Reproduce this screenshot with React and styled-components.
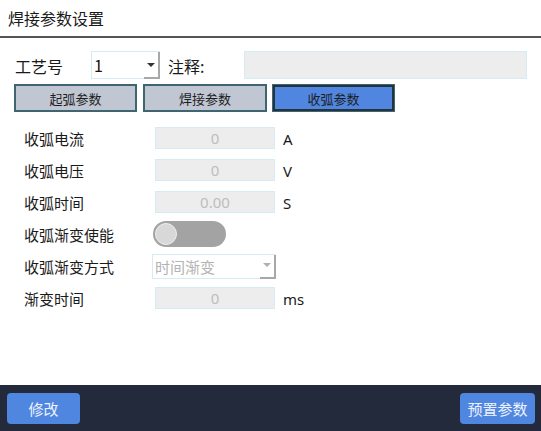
import React from "react";
import styled, { createGlobalStyle } from "styled-components";

const Global = createGlobalStyle`
  html, body { margin: 0; padding: 0; background: #fff; }
  body { font-family: "Noto Sans CJK SC", "Noto Sans", sans-serif; color: #1a1a1a; }
  * { box-sizing: border-box; }
`;

const Page = styled.div`
  width: 541px;
  height: 431px;
  display: flex;
  flex-direction: column;
  overflow: hidden;
`;

const Header = styled.div`
  height: 38px;
  padding-left: 8px;
  display: flex;
  align-items: center;
  border-bottom: 2px solid #555;
  font-size: 16px;
  line-height: 1;
  padding-bottom: 1px;
`;

const Content = styled.div`
  padding: 13px 14px 0 14px;
  display: flex;
  flex-direction: column;
`;

const TopRow = styled.div`
  height: 28px;
  display: flex;
  align-items: center;
`;

const TopLabel = styled.div`
  font-size: 16px;
  width: ${(p) => p.$w}px;
  padding-left: ${(p) => p.$pl || 0}px;
  line-height: 1;
  padding-top: 2px;
`;

const SelectBox = styled.div`
  width: ${(p) => p.$w}px;
  height: ${(p) => p.$h}px;
  border: 1px solid #d6ecf4;
  background: #fff;
  display: flex;
  align-items: center;
  position: relative;
  font-size: ${(p) => p.$fs}px;
  color: ${(p) => p.$c};
  padding-left: 2px;
`;

const SelectText = styled.span`
  flex: 1;
  line-height: 1;
`;

const ArrowBtn = styled.div`
  width: 16px;
  align-self: stretch;
  border-right: 2px solid #a8a8a8;
  border-bottom: 2px solid #a8a8a8;
  display: flex;
  align-items: center;
  justify-content: center;
  margin-bottom: -1px;
  margin-right: -1px;
`;

const Tri = styled.div`
  width: 0;
  height: 0;
  border-left: 4px solid transparent;
  border-right: 4px solid transparent;
  border-top: 4px solid ${(p) => p.$c};
  margin-top: ${(p) => p.$mt || 0}px;
`;

const NoteBox = styled.div`
  margin-left: 0;
  width: 283px;
  height: 28px;
  background: #ededed;
  border: 1px solid #d6ecf4;
`;

const Tabs = styled.div`
  margin-top: 5px;
  display: flex;
  height: 28px;
`;

const Tab = styled.div`
  width: ${(p) => p.$w}px;
  margin-left: ${(p) => p.$ml}px;
  height: 28px;
  display: flex;
  align-items: center;
  justify-content: center;
  font-size: 13px;
  color: #1e1e1e;
  background: ${(p) => (p.$active ? "#5086e0" : "#c0c7d3")};
  border: ${(p) => (p.$active ? "3px solid #24343f" : "2px solid #3f6670")};
  outline: ${(p) => (p.$active ? "1px solid #3f6670" : "none")};
  outline-offset: -1px;
`;

const Form = styled.div`
  margin-top: 10px;
  display: flex;
  flex-direction: column;
`;

const Row = styled.div`
  height: 32px;
  display: grid;
  grid-template-columns: 128px 131px auto;
  align-items: center;
  padding-left: 10px;
`;

const Label = styled.div`
  font-size: 15px;
  line-height: 1;
  padding-top: 1px;
`;

const Control = styled.div`
  display: flex;
  align-items: center;
  padding-left: ${(p) => p.$pl || 0}px;
`;

const Input = styled.div`
  width: 120px;
  height: 22px;
  background: #ededed;
  border: 1px solid #d6ecf4;
  display: flex;
  align-items: center;
  justify-content: center;
  color: #bdbdbd;
  font-size: 15px;
  font-family: "Noto Sans", sans-serif;
  line-height: 1;
`;

const Unit = styled.div`
  font-family: "Noto Sans", sans-serif;
  font-size: 15px;
  padding-left: 0;
  padding-top: 2px;
  line-height: 1;
`;

const Toggle = styled.div`
  width: 73px;
  height: 26px;
  border-radius: 13px;
  background: #a3a3a3;
  display: flex;
  align-items: center;
  padding-left: 2px;
  margin-left: -2px;
`;

const Knob = styled.div`
  width: 22px;
  height: 22px;
  border-radius: 50%;
  background: #d8d8d8;
  border: 1px solid #eeeeee;
`;

const Footer = styled.div`
  margin-top: auto;
  height: 46px;
  background: #232a3c;
  display: flex;
  align-items: center;
  justify-content: space-between;
  padding: 1px 6px 0 7px;
`;

const FootBtn = styled.button`
  height: 31px;
  width: ${(p) => p.$w}px;
  background: #4f86df;
  border: none;
  border-radius: 4px;
  color: #eef2ff;
  font-family: "Noto Sans CJK SC", sans-serif;
  font-size: 15px;
  padding: 0;
  display: flex;
  align-items: center;
  justify-content: center;
`;

const fields = [
  { label: "收弧电流", value: "0", unit: "A" },
  { label: "收弧电压", value: "0", unit: "V" },
  { label: "收弧时间", value: "0.00", unit: "S" },
];

export default function App() {
  return (
    <Page>
      <Global />
      <Header>焊接参数设置</Header>
      <Content>
        <TopRow>
          <TopLabel $w={77} $pl={1}>工艺号</TopLabel>
          <SelectBox $w={69} $h={28} $fs={16} $c="#201008">
            <SelectText>1</SelectText>
            <ArrowBtn>
              <Tri $c="#333" $mt={1} />
            </ArrowBtn>
          </SelectBox>
          <TopLabel $w={84} $pl={8}>注释:</TopLabel>
          <NoteBox />
        </TopRow>
        <Tabs>
          <Tab $w={123} $ml={0}>起弧参数</Tab>
          <Tab $w={124} $ml={6}>焊接参数</Tab>
          <Tab $w={123} $ml={5} $active>收弧参数</Tab>
        </Tabs>
        <Form>
          {fields.map((f) => (
            <Row key={f.label}>
              <Label>{f.label}</Label>
              <Control $pl={3}>
                <Input>{f.value}</Input>
              </Control>
              <Unit>{f.unit}</Unit>
            </Row>
          ))}
          <Row>
            <Label>收弧渐变使能</Label>
            <Control $pl={3}>
              <Toggle>
                <Knob />
              </Toggle>
            </Control>
            <span />
          </Row>
          <Row>
            <Label>收弧渐变方式</Label>
            <Control>
              <SelectBox $w={124} $h={25} $fs={15} $c="#b3b3b3">
                <SelectText>时间渐变</SelectText>
                <ArrowBtn>
                  <Tri $c="#b0b0b0" $mt={-2} />
                </ArrowBtn>
              </SelectBox>
            </Control>
            <span />
          </Row>
          <Row>
            <Label>渐变时间</Label>
            <Control $pl={3}>
              <Input>0</Input>
            </Control>
            <Unit>ms</Unit>
          </Row>
        </Form>
      </Content>
      <Footer>
        <FootBtn $w={73}>修改</FootBtn>
        <FootBtn $w={75}>预置参数</FootBtn>
      </Footer>
    </Page>
  );
}
